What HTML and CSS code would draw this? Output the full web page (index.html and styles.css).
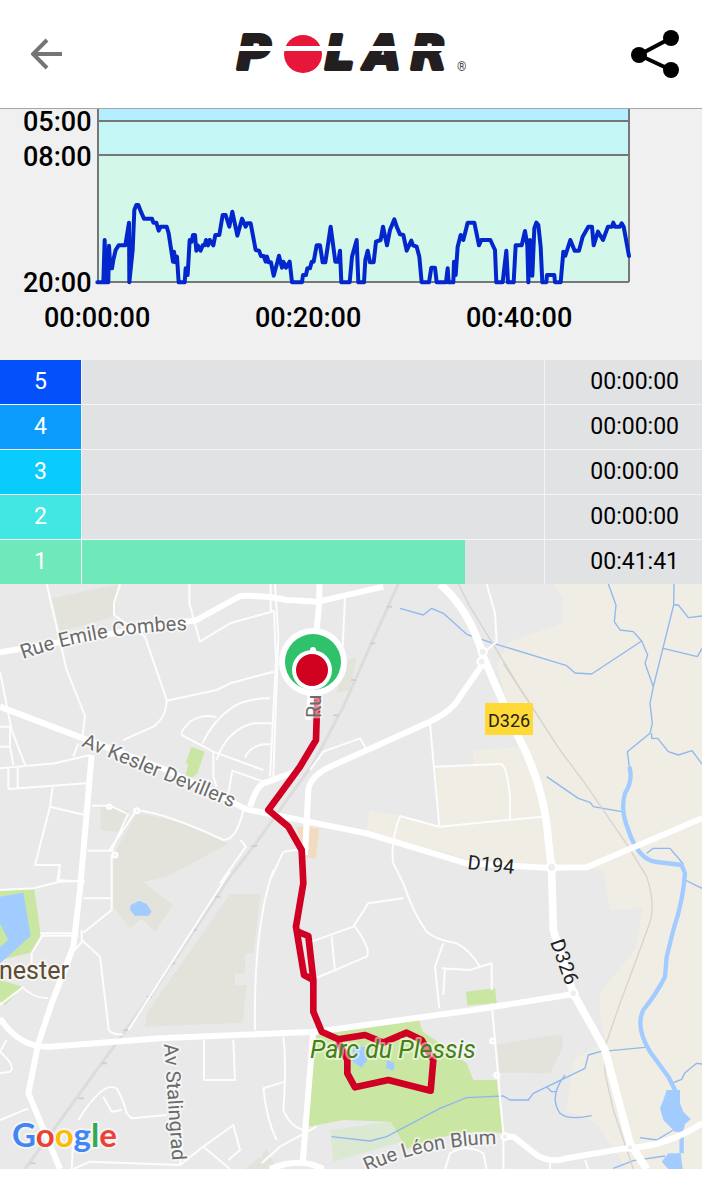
FILE: index.html
```html
<!DOCTYPE html>
<html lang="en">

<head>
  <meta charset="UTF-8">
  <meta name="viewport" content="width=device-width, initial-scale=1.0">
  <title>Polar - Training session</title>
  <link rel="stylesheet" href="styles.css">
</head>

<body>
  <header class="topbar">
    <button class="icon-btn" aria-label="Back">
      <svg width="32" height="32" viewBox="0 0 32 32"><path d="M31 16H3M16 2L2 16l14 14" fill="none" stroke="#757575" stroke-width="4"/></svg>
    </button>
    <svg class="logo" width="236" height="44" viewBox="0 0 236 44" role="img" aria-label="Polar">
      <defs>
        <linearGradient id="stripe" gradientUnits="userSpaceOnUse" x1="0" y1="0" x2="0" y2="44">
          <stop offset="0.31" stop-color="#231f20"/>
          <stop offset="0.31" stop-color="#fff"/>
          <stop offset="0.43" stop-color="#fff"/>
          <stop offset="0.43" stop-color="#231f20"/>
        </linearGradient>
      </defs>
      <g class="logo-text" fill="url(#stripe)" stroke="url(#stripe)">
        <text x="4" y="37">P</text>
        <text x="92" y="37">L</text>
        <text x="132" y="37">A</text>
        <text x="178" y="37">R</text>
      </g>
      <circle cx="70" cy="22" r="19" fill="#e6173a"/>
      <path d="M50 14H90V19H50z" fill="#fff"/>
      <text class="logo-mark" x="224" y="39">®</text>
    </svg>
    <button class="icon-btn" aria-label="Share">
      <svg width="48" height="48" viewBox="0 0 48 48"><path d="M40 8L8 25l32 15" fill="none" stroke="#000" stroke-width="4"/><circle cx="40" cy="8" r="8"/><circle cx="8" cy="25" r="8"/><circle cx="40" cy="40" r="8"/></svg>
    </button>
  </header>

  <main>
    <svg class="chart" viewBox="0 0 702 251" role="img" aria-label="Pace">
      <path d="M98 0H628V12H98z" fill="#b2eeff"/>
      <path d="M98 12H628V46H98z" fill="#c5f6f6"/>
      <path d="M98 46H628V173H98z" fill="#d3f7e8"/>
      <path class="axis" d="M98 12H629M98 46H629M97 173H629M98 0V173M629 0V173"/>
      <g transform="translate(0 -9) scale(.33333)">
        <polyline class="pace" points="292,547 310,547 314,420 318,547 325,547 327,437 331,505 336,505 340,480 347,450 356,436 376,436 387,368 388,547 398,450 403,330 409,315 415,315 424,338 432,356 456,356 460,368 469,368 476,392 482,380 500,380 506,400 519,485 522,455 526,487 531,470 536,547 554,547 557,505 563,525 569,420 575,425 579,405 585,405 589,452 593,436 602,452 608,436 614,436 618,420 624,436 629,420 640,436 646,405 658,405 668,345 677,345 688,380 697,335 712,407 726,356 737,380 742,370 752,370 767,450 777,452 783,468 791,468 797,485 801,470 806,487 813,487 821,527 832,487 837,467 846,503 850,485 858,503 869,485 876,547 906,547 909,525 918,525 922,505 930,505 935,485 941,485 950,436 960,436 968,487 976,487 992,380 1006,485 1015,485 1020,452 1024,547 1049,547 1056,470 1070,420 1075,547 1092,547 1096,480 1103,452 1110,487 1121,487 1128,425 1142,420 1149,380 1161,436 1170,390 1183,358 1190,380 1200,403 1210,405 1220,452 1234,422 1239,436 1250,440 1258,470 1265,547 1287,547 1294,503 1305,503 1310,547 1338,547 1343,505 1346,547 1360,547 1362,485 1367,525 1373,440 1382,405 1390,420 1403,368 1423,368 1437,436 1444,420 1471,420 1485,450 1489,547 1508,547 1519,452 1524,547 1541,547 1547,436 1565,436 1575,393 1582,436 1585,547 1590,420 1597,527 1603,385 1609,368 1615,375 1622,440 1627,547 1639,547 1641,525 1663,525 1665,547 1682,547 1690,455 1696,467 1711,420 1724,452 1737,452 1748,410 1765,380 1776,380 1781,436 1794,395 1809,420 1824,380 1836,380 1840,368 1845,380 1860,380 1865,370 1871,380 1887,468"/>
      </g>
      <g class="chart-label">
        <text x="23" y="22">05:00</text>
        <text x="23" y="57">08:00</text>
        <text x="23" y="183">20:00</text>
        <text x="44" y="218">00:00:00</text>
        <text x="255" y="218">00:20:00</text>
        <text x="466" y="218">00:40:00</text>
      </g>
    </svg>

    <table class="zones">
      <tbody>
        <tr><th scope="row" class="zone5">5</th><td></td><td class="time">00:00:00</td></tr>
        <tr><th scope="row" class="zone4">4</th><td></td><td class="time">00:00:00</td></tr>
        <tr><th scope="row" class="zone3">3</th><td></td><td class="time">00:00:00</td></tr>
        <tr><th scope="row" class="zone2">2</th><td></td><td class="time">00:00:00</td></tr>
        <tr><th scope="row" class="zone1">1</th><td><div class="bar zone1" style="width: 83%"></div></td><td class="time">00:41:41</td></tr>
      </tbody>
    </table>

    <svg class="map" viewBox="0 0 702 585" role="img" aria-label="Route map">
      <defs>
        <path id="emile" d="M23 75Q100 48 192 46"/>
        <path id="kesler" d="M81 162L238 226"/>
        <path id="blum" d="M367 588Q425 561 500 560"/>
      </defs>
      <g transform="translate(0 -4) scale(.33333)">
        <!-- land -->
        <path class="field" d="M1660 12L1690 60L1685 130L1520 190L1490 260L1565 500L1420 512V560L1310 563L1318 740L1190 705L1108 690L1100 755L1400 835L1810 870L1830 990L1928 984L1905 1110L1800 1240V1300L1815 1385L1720 1440L1700 1590L1790 1630L1880 1767H2106V12z"/>
        <g class="estate">
          <path d="M155 55L360 12L340 110L180 155z"/>
          <path d="M302 680L385 690L375 757L302 752z"/>
          <path d="M410 700Q560 720 685 792L500 890L430 905L520 975L465 1055L425 1015L390 1045L340 980V825z"/>
          <path d="M690 942H782L760 1120H735V1180H705V1215H740L728 1328L435 1340L440 1300z"/>
          <path d="M1490 1393L1685 1363L1690 1400L1650 1480L1500 1478z"/>
          <path d="M1030 240L1070 235L1050 330L1010 340z"/>
          <path d="M735 1767L780 1730V1767zM760 1767L800 1705L830 1767z"/>
        </g>
        <g class="park">
          <path d="M575 500L614 515L592 580L578 592L557 588L565 552L557 548z"/>
          <path d="M0 932L103 928L122 1064L92 1118L0 1140z"/>
          <path d="M0 1200L68 1220L15 1276L0 1262z"/>
          <path d="M940 1360L1255 1312L1268 1355L1320 1390L1400 1450L1420 1500H1490L1508 1660Q1380 1640 1220 1708L1172 1625L1030 1620L924 1640z"/>
          <path d="M1398 1235L1485 1224L1490 1270L1402 1276z"/>
        </g>
        <path d="M990 1650L1170 1625L1205 1685L1000 1745z" fill="#dbe8d2"/>
        <path d="M890 740L958 745L948 835L910 832z" fill="#f1dcc2"/>

        <!-- water -->
        <g class="water">
          <path d="M0 950L70 938L92 1068L45 1110L0 1150V1102L25 1080L0 1030z"/>
          <path d="M392 975L418 962L440 972L455 995L445 1007H405L390 990z"/>
          <path d="M1060 1400H1095L1102 1440L1085 1463L1058 1445zM1160 1440L1185 1450L1180 1472L1158 1465z"/>
          <path d="M2000 1530L1990 1560L1980 1585L1990 1620L2025 1655L2048 1658L2055 1632L2072 1618L2050 1595L2040 1570V1530z"/>
          <path d="M2005 1720H2042L2048 1767H2005L1985 1745z"/>
        </g>
        <g class="stream">
          <path d="M1200 85L1270 105L1295 85L1330 100L1400 163L1480 190L1700 257L1725 279L1775 282L1925 183L1900 155L1860 150L1843 125L1848 75L1825 12"/>
          <path d="M1925 183L1943 225L1935 250L1960 320L1950 370L1957 430L1950 460L1882 515L1888 560M1960 320L1990 200L2021 75L2022 12M2021 75H2035L2065 113L2106 108M1990 205L2092 230L2106 205M1955 460V475H1973L2005 515L2035 525L2076 512L2106 552"/>
          <path d="M1640 590L1735 655L1770 667L1780 680L1865 695M1940 820L1960 805H2010L2050 852M2055 900L2106 925"/>
          <path d="M995 1670L1110 1683L1160 1670L1320 1585L1400 1553L1510 1548L1530 1560H1585L1600 1540L1755 1465L1765 1425L1800 1415L1935 1402M1640 1520L1655 1535H1670M1695 1485Q1645 1550 1680 1600Q1705 1622 1775 1607M2020 1508L2045 1498L2055 1478L2090 1450L2106 1452M1920 1673L1970 1680L2020 1650M1840 1765L1900 1742L1995 1728"/>
        </g>
        <path class="river" d="M1888 560Q1900 600 1875 640Q1860 690 1885 750Q1915 840 1970 846L2045 855L2055 880Q2050 960 2020 1050L2000 1130L1995 1190Q1970 1240 1930 1290Q1905 1340 1950 1415L2005 1490L2030 1540M2045 1655V1720"/>

        <!-- railways -->
        <path class="rail" d="M1195 12L1110 200L1030 380L940 550L760 800L690 890L450 1250L75 1767"/>
        <path class="rail-track" d="M1375 12L1410 80L1545 300L1680 510L1755 610L1885 800L1940 890Q1970 980 1945 1040L1905 1150L1860 1270L1815 1400V1480L1840 1590L1900 1767M1510 250L1680 510"/>
        <path class="rail-ties" d="M1160 80h16M1110 190h16M1053 300h16M1000 406h16M755 798h16M645 950h16M575 1050h16M510 1150h16M440 1250h16M370 1350h16M305 1450h16M235 1555h16M90 1750h16"/>

        <!-- minor roads -->
        <g class="street">
          <path d="M140 12L200 270L255 408L248 465M360 12L342 70V105L435 170L500 360Q500 410 460 440L370 480M568 12V70L600 185L690 130L815 95M500 362L650 330L690 310L820 275M0 275L35 450L75 555M0 440H30V500L40 555M0 500H30M0 565L165 550L270 525M25 565V627L260 610M53 565V625M220 530L235 490M158 622L150 680L105 855H180L172 900L255 905M150 680L255 705"/>
          <path d="M545 465Q540 455 570 425Q610 400 650 412M545 465L640 515L790 570M607 490Q640 420 700 380Q740 355 810 355M650 540Q680 450 760 430H815M735 532Q750 500 790 493H815M640 515V590L650 620M685 640L697 572L790 605"/>
          <path d="M812 12V90L822 95L828 240L810 590M825 12L835 170L820 590M275 677H330L380 700M325 815L410 690Q500 700 670 780Q710 780 730 690M385 700L335 810M262 812H340M335 825V990L250 1058M250 955H335M722 780L738 800L660 910M1035 55L1028 200M930 570L970 515L1080 475L1098 505"/>
          <path d="M1290 430L1318 740L1200 708Q1170 790 1180 850L1210 910Q1240 1000 1280 1055Q1310 1080 1370 1090Q1410 1110 1440 1160M1305 560L1500 552Q1520 550 1530 650V718M1318 740L1500 722L1630 710M1460 12L1485 100L1490 185L1450 220"/>
          <path d="M820 870Q760 1040 765 1350M935 1085L1060 1040L1105 970L1210 955M995 1070L1005 1175M935 1200L1100 1130Q1115 1110 1065 1040M850 815L925 805M850 815L815 890M1330 1090L1305 1160L1318 1285M1325 1165L1410 1170L1475 1150V1230M1335 1165L1330 1245M1475 1270L1510 1660V1767"/>
          <path d="M120 1060H235M122 1067H235M95 1120L130 1063M95 1120V1150M245 1050V1080L300 1130L325 1340Q325 1365 370 1363M250 1080L225 1110M65 1220Q100 1255 145 1255M0 1275L70 1220M180 870L175 905M0 930L100 925L180 905L250 902M20 1380L0 1415Q50 1460 30 1475L0 1480M0 1620L85 1585"/>
          <path d="M235 1620Q310 1500 350 1525Q370 1560 380 1600L395 1615L500 1605M310 1550L335 1595L365 1590M215 1767L220 1670M220 1767L270 1745L540 1755L610 1700L700 1635L720 1710L685 1740M610 1700L690 1767M612 1380V1500H705L700 1380M785 1750L840 1700L950 1640M850 1370Q860 1460 850 1590Q870 1640 910 1650M855 1505L790 1525Q800 1620 830 1680M1335 1767L1350 1720Q1400 1690 1450 1720L1460 1767M1650 1740V1767M1755 1740L1765 1767"/>
          <path d="M690 875L385 1350M540 1755L545 1700"/>
        </g>

        <!-- main roads -->
        <g class="road">
          <path d="M0 217L190 185L590 120L720 48Q800 45 860 60L955 65L1150 20"/>
          <path d="M0 380L210 460L500 570L740 688L1100 760L1400 850L1640 863L1760 862L2106 715"/>
          <path d="M958 12V65L945 200L925 420"/>
          <path d="M275 525L240 930L220 1100L155 1270L115 1390L85 1540L180 1767"/>
          <path d="M915 825L925 630Q930 590 990 560L1290 425Q1360 390 1380 350L1450 250"/>
          <path d="M750 680Q770 620 790 610L900 570"/>
          <path d="M0 1315Q60 1405 150 1400L480 1375L950 1355L1420 1290L1720 1242"/>
          <path d="M940 1350L908 1750M810 1767Q900 1730 970 1767"/>
          <path d="M1510 1670H1540L1610 1725Q1650 1750 1700 1735L1870 1706Q2000 1700 2106 1630"/>
        </g>
        <path class="road wide" d="M1320 12Q1410 90 1450 230L1480 300L1550 460Q1635 620 1645 780L1655 870L1660 1050L1720 1240L1815 1410L1890 1690L1940 1767"/>
        <g class="junction">
          <circle cx="1448" cy="215" r="12"/><circle cx="1445" cy="245" r="12"/><circle cx="1655" cy="862" r="14"/><circle cx="1720" cy="1240" r="12"/><circle cx="1890" cy="1702" r="10"/><circle cx="1515" cy="1670" r="10"/><circle cx="1478" cy="1383" r="7"/><circle cx="1490" cy="1486" r="7"/><circle cx="345" cy="825" r="7"/><circle cx="410" cy="692" r="7"/><circle cx="328" cy="680" r="6"/>
        </g>

        <!-- recorded route -->
        <path class="route" d="M952 350L948 480L900 560L805 690L865 740L905 810L910 910L888 1040L912 1185L940 1200M893 1055L925 1068L940 1200V1295L965 1355L1015 1378L1095 1365L1150 1388L1220 1358L1265 1380L1300 1440L1292 1532L1165 1500L1065 1522L1042 1480V1440L1015 1385"/>
      </g>

      <g class="street-label">
        <text><textPath href="#emile">Rue Emile Combes</textPath></text>
        <text><textPath href="#kesler">Av Kesler Devillers</textPath></text>
        <text><textPath href="#blum">Rue Léon Blum</textPath></text>
        <text transform="translate(164 460) rotate(86)">Av Stalingrad</text>
        <text transform="translate(321 134) rotate(-90)">Ru</text>
      </g>
      <text class="town-label" x="-1" y="395">nester</text>
      <text class="park-label" x="310" y="474">Parc du Plessis</text>
      <path d="M485 119H533V151H485z" fill="#ffd935"/>
      <g class="route-label">
        <text class="badge" x="488" y="143">D326</text>
        <text transform="translate(467 285) rotate(6)">D194</text>
        <text transform="translate(550 358) rotate(70)">D326</text>
      </g>

      <!-- start and finish -->
      <circle cx="313" cy="78" r="34" fill="#fff"/>
      <circle cx="313" cy="78" r="28" fill="#2fc26a"/>
      <circle cx="313" cy="66" r="3" fill="#fff"/>
      <circle cx="312" cy="86" r="20" fill="#fff"/>
      <circle cx="312" cy="86" r="16" fill="#d0021f"/>

      <text class="google" x="12" y="563"><tspan fill="#4285f4">G</tspan><tspan fill="#ea4335">o</tspan><tspan fill="#fbbc05">o</tspan><tspan fill="#4285f4">g</tspan><tspan fill="#34a853">l</tspan><tspan fill="#ea4335">e</tspan></text>
    </svg>
  </main>
</body>

</html>
```
FILE: styles.css
```css
body {
  font-family: Roboto, sans-serif;
  background: #fff;
  color: #000;
  margin: 0;
}

.topbar {
  display: flex;
  align-items: center;
  justify-content: space-between;
  height: 108px;
  padding: 0 23px;
  border-bottom: 1px solid #a6a6a6;
}

.icon-btn {
  display: flex;
  justify-content: center;
  width: 48px;
  padding: 0;
  border: none;
  background: none;
  cursor: pointer;
}

.logo-text {
  font: italic bold 46px "DejaVu Sans", sans-serif;
  stroke-width: 4;
  stroke-linejoin: round;
}

.logo-mark {
  font-size: 12px;
  fill: #444;
}

.chart,
.map {
  display: block;
  width: 100%;
  height: auto;
}

.chart {
  background: #f0f0f0;
}

.axis {
  fill: none;
  stroke: #777;
  stroke-width: 2;
}

.pace {
  fill: none;
  stroke: #0327cd;
  stroke-width: 12;
  stroke-linejoin: round;
  stroke-linecap: round;
}

.chart-label {
  font-size: 27px;
  font-weight: 500;
}

/* zones */
.zones {
  width: 100%;
  table-layout: fixed;
  border-spacing: 0;
  font-size: 23px;
  line-height: 44px;
}

.zones th,
.zones td {
  height: 44px;
  padding: 0;
  border-bottom: 1px solid #f5f5f5;
  background: #e1e2e4;
}

.zones tr:last-child > * {
  border-bottom: none;
}

.zones th {
  width: 81px;
  border-right: 1px solid #f5f5f5;
  color: #fff;
  font-weight: 400;
}

.zones .time {
  width: 134px;
  padding-right: 23px;
  border-left: 1px solid #f5f5f5;
  text-align: right;
}

.bar {
  height: 44px;
}

.zones .zone5 {
  background: #0450fb;
}

.zones .zone4 {
  background: #0b9bfc;
}

.zones .zone3 {
  background: #09ccfd;
}

.zones .zone2 {
  background: #42e6e2;
}

.zones .zone1 {
  background: #70e9ba;
}

/* map */
.map {
  background: #e9e9e9;
}

.field {
  fill: #f0ede4;
}

.estate {
  fill: #e3e3dc;
}

.park {
  fill: #c9e6a2;
}

.water {
  fill: #a2cbff;
}

.stream,
.river,
.rail,
.rail-track,
.rail-ties,
.street,
.road,
.route {
  fill: none;
  stroke-linejoin: round;
}

.stream {
  stroke: #8fb8ee;
  stroke-width: 4;
}

.river {
  stroke: #a2cbff;
  stroke-width: 13;
}

.rail {
  stroke: #dcdcdc;
  stroke-width: 9;
}

.rail-track {
  stroke: #d6d4d0;
  stroke-width: 4;
}

.rail-ties {
  stroke: #d0d0d0;
  stroke-width: 6;
}

.street {
  stroke: #fdfdfd;
  stroke-width: 6;
}

.road {
  stroke: #fff;
  stroke-width: 18;
}

.wide {
  stroke-width: 23;
}

.junction {
  fill: #eee;
  stroke: #fff;
  stroke-width: 7;
}

.route {
  stroke: #d00024;
  stroke-width: 20;
}

.street-label,
.town-label,
.park-label,
.route-label,
.google {
  font-size: 20px;
  paint-order: stroke;
  stroke: rgba(255, 255, 255, 0.5);
  stroke-width: 4;
  stroke-linejoin: round;
}

.street-label {
  fill: #6b6b6b;
}

.town-label {
  font-size: 25px;
  fill: #5a4d33;
}

.park-label {
  font-size: 25px;
  font-style: italic;
  fill: #438016;
}

.route-label {
  fill: #222;
  stroke: none;
}

.badge {
  font-size: 18px;
}

.google {
  font-family: Lato, sans-serif;
  font-size: 33px;
  font-weight: 700;
}
```
